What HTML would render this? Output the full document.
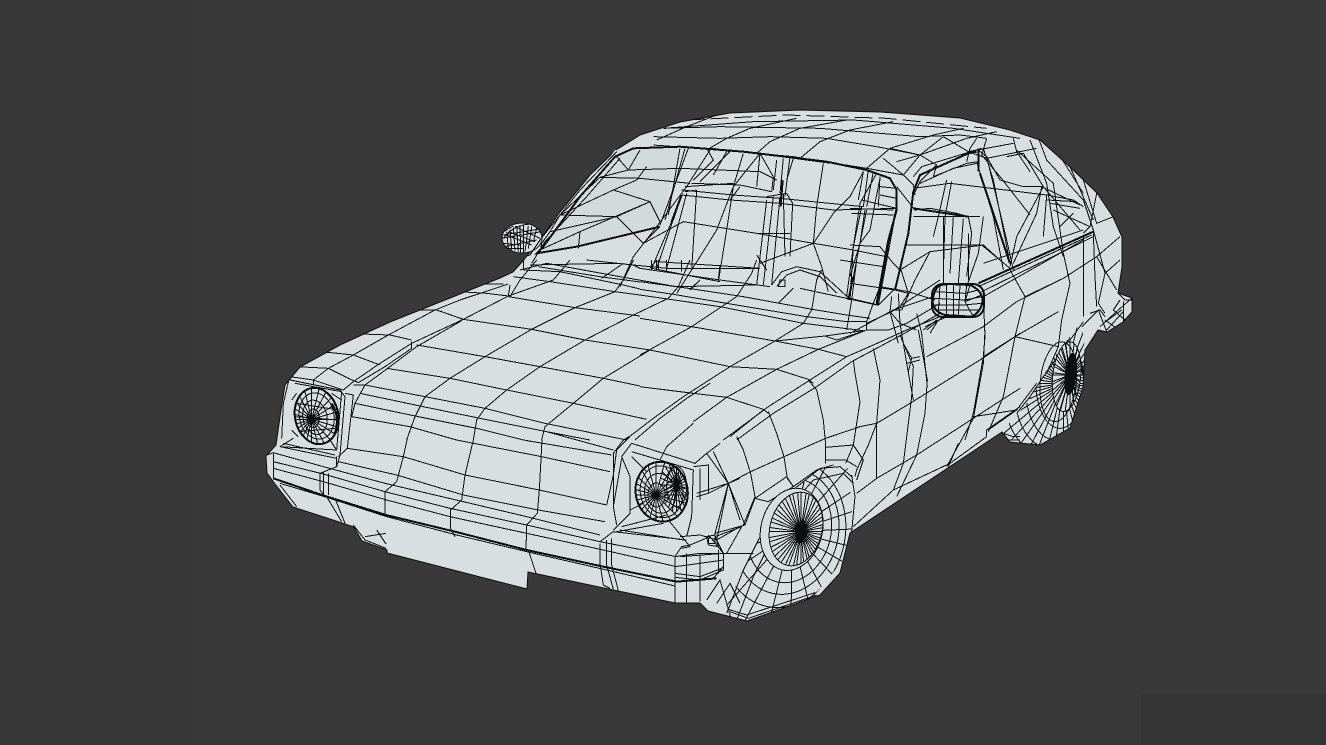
<!DOCTYPE html>
<html><head><meta charset="utf-8"><title>Wireframe car</title>
<style>
html,body{margin:0;padding:0;width:1326px;height:745px;overflow:hidden;background:#393939}
svg{position:absolute;left:0;top:0;display:block}
.m path,.m ellipse{fill:none;stroke:#0c0f10;stroke-width:1;vector-effect:non-scaling-stroke}
.m .h{stroke-width:2}
.m .f{fill:#0c0f10}
.m .b{fill:#d9dfe0}
</style></head><body>
<svg width="1326" height="745" viewBox="0 0 1326 745" xmlns="http://www.w3.org/2000/svg">
<defs>
<path id="rays" style="fill:none;stroke:#0c0f10;stroke-width:1;vector-effect:non-scaling-stroke" d="M-1 0L1 0M-.97-.26L.97.26M-.87-.5L.87.5M-.71-.71L.71.71M-.5-.87L.5.87M-.26-.97L.26.97M0-1L0 1M.26-.97L-.26.97M.5-.87L-.5.87M.71-.71L-.71.71M.87-.5L-.87.5M.97-.26L-.97.26"/>
<clipPath id="body">
<path d="M266 456L267 473L275 484L293 507L333 520L354 527L362 541L387 550L387 553L527 589L528 572L675 603L695 603L700 603L708 611L747 621L820 595L840 573L850 533L1002 432L1010 442L1040 445L1070 428L1083 387L1085 350L1098 330L1107 332L1123 322L1132 312L1132 298L1118 293L1122 267L1122 237L1113 217L1097 193L1070 167L1040 140L1010 130L960 118L880 112L800 110L730 113L680 122L640 135L616 150L590 175L560 212L540 240L522 262L513 272L500 278L450 298L390 322L340 345L300 367L285 385L281 410L276 445Z"/>
<ellipse cx="522" cy="238" rx="20" ry="15"/>
<rect x="932" y="284" width="52" height="33" rx="11"/>
</clipPath>
<clipPath id="hc1"><ellipse cx="170" cy="228" rx="65" ry="85" transform="rotate(-12 170 228)"/></clipPath>
<clipPath id="hc2"><ellipse cx="1205" cy="455" rx="78" ry="90" transform="rotate(-10 1205 455)"/></clipPath>
<clipPath id="wa"><path d="M5 470L70 330L115 240L175 150L225 85L300 25L385 25L400 200L370 300L280 410L100 490Z"/></clipPath>
<clipPath id="wi"><ellipse cx="228" cy="207" rx="78" ry="112" transform="rotate(14 228 207)"/></clipPath>
<clipPath id="ra"><path d="M695 605L705 690L700 800L660 925L570 975L480 965L455 935L530 850L620 700Z"/></clipPath>
<clipPath id="ri"><ellipse cx="650" cy="770" rx="42" ry="105" transform="rotate(6 650 770)"/></clipPath>
</defs>
<rect width="1326" height="745" fill="#393939"/>
<rect x="0" y="0" width="197" height="745" fill="#373737"/>
<rect x="1141" y="695" width="185" height="50" fill="#343434"/>
<path fill="#d9dfe0" stroke="#0c0f10" d="M266 456L267 473L275 484L293 507L333 520L354 527L362 541L387 550L387 553L527 589L528 572L675 603L695 603L700 603L708 611L747 621L820 595L840 573L850 533L1002 432L1010 442L1040 445L1070 428L1083 387L1085 350L1098 330L1107 332L1123 322L1132 312L1132 298L1118 293L1122 267L1122 237L1113 217L1097 193L1070 167L1040 140L1010 130L960 118L880 112L800 110L730 113L680 122L640 135L616 150L590 175L560 212L540 240L522 262L513 272L500 278L450 298L390 322L340 345L300 367L285 385L281 410L276 445Z"/>
<ellipse cx="522" cy="238" rx="20" ry="15" fill="#d9dfe0" stroke="#0c0f10"/>
<rect x="932" y="284" width="52" height="33" rx="11" fill="#d9dfe0" stroke="#0c0f10" stroke-width="2"/>
<path d="M540 255L615 150L680 148L660 225Z" fill="#d3dadb"/>
<g clip-path="url(#body)"><g class="m" shape-rendering="crispEdges">

<!-- HOOD -->
<g transform="translate(290,260) scale(.33333)">
<path d="M350 540L375 470L405 410L480 355L585 290L725 208L855 143L975 95L1000 60L1030 0"/>
<path d="M550 540L560 480L585 445L650 390L750 320L885 240L1030 165L1135 115L1165 80L1200 0"/>
<path d="M755 540L765 500L850 430L940 355L1080 270"/>
<path d="M1005 540L1090 475L1180 410M1035 540L1110 475L1190 415L1260 370"/>
<path d="M190 365L270 310L365 250L520 178L655 108L790 60L840 0"/>
<path d="M225 375L300 320L380 260L515 182M205 368L285 320L365 265M365 245V265"/>
<path d="M70 360L115 325L190 285L295 225L435 150L510 120L655 72"/>
<path d="M95 275L190 285L270 315M215 222L300 225L365 240M360 150L440 150L520 178M505 95L590 100L655 108"/>
<path d="M520 178L725 208L885 240L1080 270"/>
<path d="M655 110L855 143L1050 168"/>
<path d="M380 255L585 290L750 320L940 355L1050 378"/>
<path d="M290 325L480 355L650 390L850 430L1070 478"/>
<path d="M225 375L405 410L585 445L765 490L1010 540"/>
<path d="M210 400L400 440L570 475L770 515L900 540"/>
<path d="M195 430L385 470L560 505L700 540M185 470L360 500L500 540"/>
<path d="M670 50L780 65L975 95L1050 105"/>
<path d="M700 30L810 35L1000 75L1050 87"/>
<path d="M745 20L930 50L1050 66M890 0L1030 15L1050 25"/>
<path d="M1000 10L935 55M1230 60L1200 90M660 75L655 108M660 110L690 60L740 0M585 72L640 72"/>
<path d="M1085 0V30M1105 0V30M1130 0V35M1175 0V35"/>
<path d="M0 340L20 320L115 325L175 355L205 368M0 350L70 360L160 390L190 365M70 360V372"/>
</g>

<!-- FENDER TOP -->
<g transform="translate(640,260) scale(.33333)">
<path d="M0 285L155 200L245 140L290 110L335 40L350 0"/>
<path d="M130 410L270 320L405 243L490 190L515 150L530 60L545 30"/>
<path d="M160 485L260 412L410 328L535 268L680 210"/>
<path d="M0 175L155 200L405 243L535 268L620 290"/>
<path d="M0 380L160 400L260 412L370 448L385 460"/>
<path d="M30 270L270 320L410 328L505 358L520 370"/>
<path d="M250 540L385 440L510 360L620 290L700 255L800 210L900 170"/>
<path d="M290 540L400 460L530 380L635 305L710 265L830 200L900 160M270 530L370 450"/>
<path d="M0 65L145 85L310 110L500 145L620 165L690 175"/>
<path d="M0 88L100 103L260 130L500 170L620 185L680 185"/>
<path d="M0 105L240 140L490 190L670 212"/>
<path d="M0 25L240 60L390 80"/>
<path d="M680 210V185L700 130M620 210L635 120L650 0M555 228L590 240L680 210H745L800 190L900 130M405 243L555 228L670 212"/>
<path d="M700 130L720 80L740 0M750 155L780 190L790 250M680 190L755 155L900 60M720 80L805 95L885 120"/>
<path d="M395 75L425 35L470 20L540 35L600 90L630 118M410 80L440 45L480 30L540 50L590 100M415 80L420 60H435V80Z"/>
<path d="M415 130L460 85M480 85L620 115L710 135M240 15L235 60M180 60L150 88"/>
<path d="M755 110L750 155L775 250M775 100L780 190L830 210M50 0V30M80 0V35M30 25L50 0"/>
<path d="M790 250L815 295L805 335M840 290L815 295"/>
</g>

<!-- ROOF -->
<g transform="translate(620,105) scale(.33333)">
<path d="M130 70L400 50L700 45L1000 70L1200 100"/>
<path d="M100 95L300 100L450 95L620 100L770 125L900 150"/>
<path d="M100 120L300 135L520 155L740 190"/>
<path d="M130 70L300 65L600 70L900 95L1020 90L1100 100"/>
<path d="M200 45L500 30L800 40L1100 70" stroke-dasharray="18 6"/>
<path d="M320 100L390 70L530 40M260 135L320 100M410 145L450 110L540 70L680 45M540 160L600 110L690 75L820 50M740 190L810 130L940 90L1030 70M830 170L900 150L1040 100L1130 80"/>
<path d="M850 210L900 150L950 180L900 230L880 270M810 130L900 150L970 95M740 190L850 210L880 240L885 270M790 160L850 210"/>
<path d="M950 180L940 215L1040 175L1075 170M900 235L1000 190L1070 175M1070 100L1050 130L1040 170M1100 100L1085 150L1140 215L1230 330M1180 100L1190 140L1230 200M1045 140L1180 115M970 95L1045 140M1045 140L1100 160L1250 130"/>
<path class="h" d="M1075 130V200"/>
</g>

<!-- FRONT -->
<g transform="translate(260,340) scale(.33333)">
<path d="M860 275L1060 330M790 300L1055 345M590 300L845 350L1050 395"/>
<path d="M262 325L430 350L615 405L838 450L1040 495"/>
<path d="M235 365L410 405L610 465L835 510L1035 545"/>
<path d="M441 300L430 350L410 425L375 455L375 530"/>
<path d="M640 300L615 405L605 480L572 510L572 565L585 590"/>
<path d="M846 300L838 450L832 520L800 555L798 630"/>
<path d="M20 345L40 338L190 380L375 430L610 485L800 530L1020 585"/>
<path d="M40 365L190 402L375 455L570 505L800 555L1020 605L1250 650"/>
<path d="M40 385L190 425L380 480L570 530L800 580L1030 630L1250 680"/>
<path class="h" d="M40 415L195 468L378 525L585 575L800 630L1030 680L1250 725L1370 715"/>
<path d="M60 430L200 472L380 530L590 585L800 635L1040 690L1245 738"/>
<path d="M60 435L110 500M200 470L245 545M225 475L255 550M280 555L315 600L378 625M315 590L378 580M350 570L378 612"/>
<path d="M40 340V415M180 400V450L195 470M190 395V465M205 400V465M180 400L230 380V350"/>
<path d="M805 630L828 700M1020 610V670L1030 735L1050 745M1040 600V675L1060 748M1055 595V675L1075 752"/>
<path d="M1020 605L1060 575L1280 600"/>
<path d="M1245 650V790M1280 640V790M1320 645V785M1375 630V700"/>
<path d="M1245 650L1320 640L1390 640V690L1320 720L1245 712"/>
<path d="M1245 680L1320 670L1390 660M1245 700L1320 710L1385 685"/>
<path d="M1245 650L1265 620L1290 615L1350 590L1390 640"/>
<path d="M1340 590L1365 585L1375 620L1345 615Z"/>
<path d="M75 120L60 210L50 300L20 345M90 105L70 190L65 295M90 120L240 150L255 170L240 345L230 380"/>
<path d="M105 130L245 155L230 330L60 320"/>
<path d="M255 160L280 165L262 325L235 350M280 135L315 135L285 190L275 230"/>
<path d="M60 320L230 355M70 310L225 345M100 295L60 320M95 180L110 160M95 270L115 290M215 160L245 180M210 300L230 330"/>
<ellipse class="h" cx="170" cy="228" rx="65" ry="85" transform="rotate(-12 170 228)"/>
<ellipse cx="170" cy="228" rx="52" ry="70" transform="rotate(-12 170 228)"/>
<ellipse cx="165" cy="232" rx="36" ry="52" transform="rotate(-12 165 232)"/>
<ellipse cx="160" cy="235" rx="18" ry="28"/>
<g clip-path="url(#hc1)"><use href="#rays" transform="translate(155,238) scale(100,110)"/></g>
<path d="M110 190L235 210M105 230L235 240M115 275L225 265"/>
<ellipse class="f" cx="155" cy="238" rx="8" ry="10"/>
<path class="h" d="M215 190Q240 230 225 280"/>
<path d="M1060 500V340L1090 300L1115 285"/>
<path d="M1040 495L1060 405L1070 330L1110 290"/>
<path d="M1085 355L1060 500L1070 555"/>
<path d="M1115 310L1085 350L1110 410V520L1060 570"/>
<path d="M1115 310L1305 370L1340 340L1380 310"/>
<path d="M1115 335L1300 390L1295 530L1280 590"/>
<path d="M1300 380L1345 375V460L1310 470M1320 385V480"/>
<path d="M1085 560L1220 525M1080 570L1270 600M1070 575L1210 550"/>
<path d="M1115 350L1160 395M1110 510L1150 490M1225 540L1290 620L1265 625M1220 320L1200 360M1220 320L1300 250"/>
<ellipse class="h" cx="1205" cy="455" rx="78" ry="90" transform="rotate(-10 1205 455)"/>
<ellipse cx="1205" cy="455" rx="64" ry="78" transform="rotate(-10 1205 455)"/>
<ellipse cx="1200" cy="460" rx="46" ry="60" transform="rotate(-10 1200 460)"/>
<ellipse cx="1190" cy="465" rx="26" ry="36"/>
<ellipse cx="1250" cy="440" rx="30" ry="60"/>
<g clip-path="url(#hc2)"><use href="#rays" transform="translate(1188,465) scale(110,110)"/><use href="#rays" transform="translate(1250,435) scale(50,80)"/></g>
<ellipse class="f" cx="1188" cy="466" rx="9" ry="9"/>
<ellipse class="f" cx="1250" cy="436" rx="7" ry="11"/>
<path d="M1345 460L1405 430L1440 415M1340 340L1405 430L1440 540M1405 430L1370 600M1370 600L1440 560M1340 780L1380 720L1420 860M1370 790L1410 730L1440 790"/>
</g>

<!-- CABIN -->
<g transform="translate(500,100) scale(.33333)">
<path class="h" d="M345 170L400 145L540 140L730 155L980 185L1100 210L1170 235L1190 270L1190 330L1165 420L1130 610"/>
<path class="h" d="M345 170L240 290L130 440L110 460L230 440L480 380"/>
<path d="M350 155L240 270L120 420L90 465L70 470V510M360 175L260 290L135 425L95 490"/>
<path d="M120 460L125 430L150 395L180 345"/>
<path d="M480 375L565 145M495 360L555 145M505 345L540 145M520 360L545 285"/>
<path class="h" d="M515 365L545 285"/>
<path d="M350 170L385 210L300 232L180 345M385 210L540 205L780 215L830 240"/>
<path d="M300 232L420 235L570 250M420 150L385 210M440 200L410 240L340 270"/>
<path d="M180 345L340 270L450 305L480 365M120 450L240 395L450 305M150 395L350 350L430 430L480 380M350 350L450 305M240 395L235 445M180 345L350 350"/>
<path d="M430 430L550 365L770 400L940 430L1060 450L1160 470"/>
<path d="M620 145L640 180L580 240M640 145L690 155L600 245M680 155L640 225M730 160L700 260M780 160L820 230L815 275L720 255L575 250M780 160L770 260"/>
<path d="M545 285L690 300L840 310L1000 330L1190 325"/>
<path d="M545 270L700 285L840 295L1090 320"/>
<path d="M555 260L700 250M555 275L590 270M590 270L575 510M560 280L500 505M545 285L470 505M515 365L455 505"/>
<path d="M455 505L660 545M470 485L780 505"/>
<path d="M830 180L820 270M850 175L840 280M870 170L855 290M880 175L860 240"/>
<path class="h" d="M848 240L842 320M870 172L990 188"/>
<path d="M800 300L770 555M820 290L790 555M840 290L815 555M800 290L860 280L878 310L870 470M850 280L855 470"/>
<path d="M770 400H870"/>
<path d="M630 150L560 260L470 380L400 470L360 560"/>
<path d="M780 160L700 260L650 390L600 470L530 580"/>
<path d="M700 260L680 390L655 545M720 260L690 300"/>
<path d="M970 190L950 320L940 430L965 500L985 575"/>
<path d="M1090 215L1050 290L1000 340L940 430L780 490M1130 220L1080 310L1060 440L1050 600"/>
<path d="M1100 330L1080 430L1060 530M1085 320L1060 440L1040 590M1075 300L1090 215M1105 210L1090 320M1120 215L1100 320M1140 230L1135 320"/>
<path class="h" d="M1190 325L1165 430L1145 540L1130 615M1060 530L1045 600"/>
<path d="M1140 260L1190 265M1140 285L1190 295M1085 300L1190 325M1055 340L1180 345M1020 480L1150 500"/>
<path d="M800 510L770 465"/>
<path d="M60 510L140 490L360 530L530 560L770 555"/>
<path d="M90 495L350 490L500 505L780 505"/>
<path d="M10 415Q30 385 70 375T130 395M5 430L60 435M15 445L70 445M25 395L105 425M45 380L120 415M20 405L95 435M30 390L35 450M50 378L55 455M70 375V460M95 380L85 445M110 385L100 425M5 415L125 395M10 405L130 385M15 440L110 420M10 395L40 378M85 378L75 455M60 376L62 458M40 382L45 452M20 395L25 445"/>
<path d="M470 120L560 80L650 45"/>
</g>

<!-- REAR -->
<g transform="translate(850,120) scale(.33333)">
<path class="h" d="M380 95L355 100L210 165L190 215L175 340L135 510"/>
<path d="M395 85L215 140L190 170M140 200L195 270L240 265L320 280L355 290L365 340L350 470"/>
<path d="M410 110L450 180L520 200L575 200L690 255M385 90L410 110L470 360L490 450M400 85L430 180L480 430M380 125L430 290L460 450"/>
<path class="h" d="M390 160L480 430M190 265L355 290"/>
<path d="M190 290L390 290M170 375L395 375M190 205L300 190L590 225M290 180L265 290L250 350M305 185L285 290L280 460M280 290V490M310 290L300 460M340 295L325 490M355 340V480"/>
<path d="M150 450L240 395L400 375L450 420M240 395L195 480L155 570M150 440L175 520M175 520L150 560"/>
<path d="M0 375L90 380L130 430L150 450M0 490L135 510L175 520M0 535L85 555M85 555L130 510M0 640L130 570L250 530M130 570L155 570M0 265L130 270M45 270L30 370L0 470M90 175L75 250L60 330L30 370M135 290L85 555"/>
<path d="M400 290L385 400L350 500M395 375L480 445"/>
<path d="M470 110L520 100L580 200L500 350L480 440M500 90L610 190L640 400M540 60L590 190L610 320L640 410M575 200L560 280L490 430M590 225L580 350M580 200L690 330"/>
<path d="M590 225L670 240L700 260M590 240L680 245M600 250L690 265M610 270L720 320M670 280L630 320M400 430L700 330"/>
<path d="M560 40L590 120L700 240L730 330M600 60L700 220M660 140L730 300M740 220L720 320L700 340M700 180L740 310L790 290"/>
<path class="h" d="M385 490L730 335"/>
<path d="M385 500L725 345M395 515L730 350M400 530L700 360M700 345V590M730 340L735 470L740 560M730 330L765 460L810 420M740 410L810 350M765 460L745 550L765 580M740 410L800 510"/>
<path d="M480 450L525 530L495 650L460 830L415 935M640 400L660 490L635 600L625 680L590 760M525 530L640 475L740 410"/>
<path d="M500 545L640 475M400 620L500 545M230 710L400 620M400 710L495 650L625 575M495 650L625 680"/>
<path d="M400 530L405 650L400 710L370 880L345 960M200 580L215 640L232 800M415 930L500 870L560 790M370 890L500 870"/>
<path class="h" d="M248 545Q250 510 270 495L300 492L360 495Q395 510 398 540Q395 575 365 590L285 585Q250 575 248 545Z"/>
<path d="M250 535L345 540L395 530M250 555L340 555L395 550M258 570L345 570L385 570M270 495L265 580M290 495V585M310 495V585M330 495L325 590M350 495L345 545L370 590M345 545L395 525M345 545L360 495M255 515L345 520L385 510"/>
<path d="M230 630L280 590M225 620L290 590M235 615L280 595M220 630L260 600M240 640L265 600"/>
<path d="M700 605L675 640L630 700L580 770L540 830L500 880"/>
<g clip-path="url(#ra)">
<ellipse cx="630" cy="790" rx="72" ry="135"/><ellipse cx="615" cy="805" rx="88" ry="155"/><ellipse cx="600" cy="820" rx="105" ry="165"/><ellipse cx="590" cy="835" rx="125" ry="170"/>
<use href="#rays" transform="translate(640,790) scale(220,240)"/><use href="#rays" transform="translate(640,790) rotate(7.5) scale(220,240)"/>
</g>
<ellipse class="b" cx="650" cy="770" rx="42" ry="105" transform="rotate(6 650 770)"/>
<g clip-path="url(#ri)"><use href="#rays" transform="translate(660,765) scale(70,140)"/><use href="#rays" transform="translate(660,765) rotate(7.5) scale(70,140)"/></g>
<ellipse cx="625" cy="785" rx="54" ry="120" transform="rotate(6 625 785)"/>
<ellipse class="f" cx="662" cy="762" rx="16" ry="62" transform="rotate(6 662 762)"/>
<path d="M695 620L745 570L770 635M720 580L750 570L765 590M750 620L805 570L845 535M760 610L815 570M770 630L820 575V605M805 520L825 540H845M820 545V605M790 570L825 600M765 600L800 625M810 540L790 570"/>
</g>

<!-- FRONT SIDE -->
<g transform="translate(680,330) scale(.33333)">
<path d="M265 245L290 310L312 380L322 445L340 470"/>
<path d="M385 150L410 180L430 270L437 345V400"/>
<path d="M520 90L525 130L540 215L520 345L497 400"/>
<path d="M580 55L600 150L590 280L565 345L530 420L525 440"/>
<path d="M170 320L190 360L212 430L225 500L190 585"/>
<path d="M100 365L145 460L195 585M145 460L105 610"/>
<path d="M50 490L145 460L212 425L312 380L437 325L540 290L590 280L690 220L900 90L1020 10"/>
<path d="M225 505L320 440L340 470M225 505L265 515L340 470L410 420L460 405"/>
<path d="M437 352L520 345L550 390L530 450M437 390H497L530 410"/>
<path d="M660 15L700 110L695 200L670 400L640 480"/>
<path d="M715 0L742 150L735 250L710 375L650 500"/>
<path d="M670 40L680 100L700 210M720 90L680 100M590 280V445"/>
<path d="M590 445L710 375L880 265L965 210L1020 175M530 490L590 445M520 590L640 480L810 400L920 320"/>
<path d="M915 0L910 100L880 265L800 410M835 340L805 410M1020 230L920 300V320"/>
<path d="M105 610L195 585L225 505M105 620L185 590L140 670M0 680L130 670L220 670"/>
<path d="M0 620L60 615L110 630L130 670V710L100 745L0 755"/>
<path d="M85 615V640H110M105 610V640"/>
<path d="M965 305L985 330H1020M970 310L1000 320H1020"/>
</g>

<!-- FRONT WHEEL -->
<g transform="translate(720,460) scale(.33333)">
<path d="M20 460L70 330L115 240L175 150L225 85L300 25L360 20L395 50"/>
<path d="M50 480L100 350L150 250L210 140L280 60L370 40L400 70"/>
<path d="M395 45L405 110L395 215"/>
<g clip-path="url(#wa)">
<ellipse cx="208" cy="212" rx="125" ry="158" transform="rotate(14 208 212)"/>
<ellipse cx="200" cy="215" rx="155" ry="190" transform="rotate(14 200 215)"/>
<ellipse cx="190" cy="220" rx="185" ry="225" transform="rotate(14 190 220)"/>
<use href="#rays" transform="translate(215,215) rotate(14) scale(290,320)"/>
</g>
<ellipse class="b" cx="215" cy="208" rx="92" ry="125" transform="rotate(14 215 208)"/>
<ellipse cx="228" cy="207" rx="78" ry="112" transform="rotate(14 228 207)"/>
<g clip-path="url(#wi)"><use href="#rays" transform="translate(243,215) scale(140,170)"/><use href="#rays" transform="translate(243,215) rotate(7.5) scale(140,170)"/></g>
<ellipse class="f" cx="243" cy="215" rx="11" ry="34" transform="rotate(10 243 215)"/>
<path d="M30 455L85 475L290 405M25 448L80 465L285 398"/>
</g>

</g></g>
</svg>
</body></html>
